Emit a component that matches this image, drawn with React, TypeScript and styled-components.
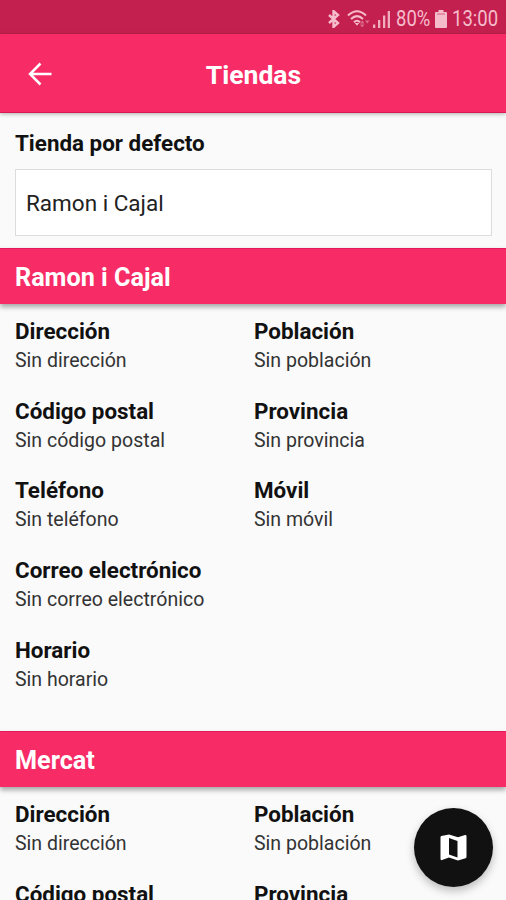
import React from 'react';
import styled, { createGlobalStyle } from 'styled-components';

const GlobalStyle = createGlobalStyle`
  * { box-sizing: border-box; }
  body {
    margin: 0;
    background: #fafafa;
    font-family: Roboto, sans-serif;
    overflow: hidden;
  }
`;

const Screen = styled.div`
  position: relative;
  display: flex;
  flex-direction: column;
  width: 506px;
  height: 900px;
  overflow: hidden;
  background: #fafafa;
  color: #111;
`;

const StatusBar = styled.div`
  display: flex;
  flex: none;
  align-items: center;
  justify-content: flex-end;
  height: 34px;
  padding: 3px 7px 0 0;
  background: #c4204f;
  color: #f5bccb;
`;

const StatusText = styled.span<{ $width: number }>`
  width: ${(p) => p.$width}px;
  font-size: 22px;
  line-height: 24px;
  white-space: nowrap;
  transform: scaleX(0.84);
  transform-origin: left center;
`;

const StatusIcon = styled.svg<{ $gap: number }>`
  display: block;
  flex: none;
  margin-right: ${(p) => p.$gap}px;
`;

const AppBar = styled.header`
  display: grid;
  flex: none;
  grid-template-columns: 80px 1fr 79px;
  align-items: center;
  height: 79px;
  padding: 2px 0 0 0;
  background: #f72c66;
  border-bottom: 1px solid #d81b55;
  box-shadow: 0 1px 4px rgba(0, 0, 0, 0.3);
  color: #fff;
  z-index: 1;
`;

const BackButton = styled.button`
  display: flex;
  align-items: center;
  justify-content: center;
  height: 60px;
  padding: 0;
  border: 0;
  background: none;
  color: inherit;
`;

const Title = styled.h1`
  margin: 0;
  padding-top: 2px;
  font-size: 26.5px;
  font-weight: 700;
  line-height: 30px;
  text-align: center;
`;

const DefaultStore = styled.section`
  display: flex;
  flex: none;
  flex-direction: column;
  height: 135px;
  padding: 17px 14px 0 15px;
`;

const Label = styled.div`
  font-size: 22.4px;
  font-weight: 700;
  line-height: 26px;
  white-space: nowrap;
`;

const Select = styled.div`
  display: flex;
  align-items: center;
  height: 67px;
  margin-top: 13px;
  padding-left: 10px;
  background: #fff;
  border: 1px solid #dcdcdc;
  font-size: 22.5px;
  color: #222;
`;

const StoreHeader = styled.h2`
  flex: none;
  height: 56px;
  margin: 0;
  padding: 2px 0 0 15px;
  background: #f72c66;
  border-top: 1px solid #e01a5b;
  box-shadow: 0 3px 5px rgba(0, 0, 0, 0.34);
  color: #fff;
  font-size: 25.2px;
  font-weight: 700;
  line-height: 54px;
`;

const Fields = styled.dl`
  display: grid;
  flex: none;
  grid-template-columns: 239px 1fr;
  grid-auto-rows: 79.7px;
  height: 427px;
  margin: 0;
  padding: 14px 0 0 15px;
`;

const Field = styled.div<{ $wide?: boolean }>`
  grid-column: ${(p) => (p.$wide ? '1 / -1' : 'auto')};
`;

const Name = styled(Label).attrs({ as: 'dt' })``;

const Value = styled.dd`
  margin: 4px 0 0;
  font-size: 19.55px;
  line-height: 26px;
  color: #333;
`;

const MapButton = styled.button`
  position: absolute;
  right: 13px;
  bottom: 13px;
  display: flex;
  align-items: center;
  justify-content: center;
  width: 79px;
  height: 79px;
  padding: 0;
  border: 0;
  border-radius: 50%;
  background: #111;
  color: #fff;
  box-shadow: 0 4px 9px rgba(0, 0, 0, 0.25);
  z-index: 2;
`;

const fields = [
  { name: 'Dirección', value: 'Sin dirección' },
  { name: 'Población', value: 'Sin población' },
  { name: 'Código postal', value: 'Sin código postal' },
  { name: 'Provincia', value: 'Sin provincia' },
  { name: 'Teléfono', value: 'Sin teléfono' },
  { name: 'Móvil', value: 'Sin móvil' },
  { name: 'Correo electrónico', value: 'Sin correo electrónico', wide: true },
  { name: 'Horario', value: 'Sin horario', wide: true },
];

const Store = ({ name }: { name: string }) => (
  <>
    <StoreHeader>{name}</StoreHeader>
    <Fields>
      {fields.map((f) => (
        <Field key={f.name} $wide={f.wide}>
          <Name>{f.name}</Name>
          <Value>{f.value}</Value>
        </Field>
      ))}
    </Fields>
  </>
);

const BluetoothIcon = () => (
  <StatusIcon $gap={7} width="12" height="18" viewBox="0 0 12 18" fill="none" stroke="currentColor" strokeWidth="2.4">
    <path d="M1 5l9 8-4.500 4V1L10 5 1 13" />
  </StatusIcon>
);

const WifiIcon = () => (
  <StatusIcon $gap={3} width="23" height="18" viewBox="0 0 23 18" fill="none" stroke="currentColor" strokeWidth="2">
    <path d="M1 5.500Q10 -3 19 5.500M4 9Q10 3.200 16 9M7 12.300Q10 9.300 13 12.300" />
    <path d="M7.800 13h4.400L10 15.800z" fill="currentColor" stroke="none" />
    <path d="M13 13.500l2.200-3 2.200 3zM13 14.500h4.400l-2.200 3zM18 10.500h4.500l-2.200 3z" fill="currentColor" stroke="none" opacity=".5" />
  </StatusIcon>
);

const SignalIcon = () => (
  <StatusIcon $gap={6} width="17" height="18" viewBox="0 0 17 18" fill="currentColor">
    <path d="M0 14.500h2.300V18H0zM5 10h2.300v8H5zM10 5.500h2.300V18H10zM14.700 1H17v17h-2.300z" opacity=".9" />
  </StatusIcon>
);

const BatteryIcon = () => (
  <StatusIcon $gap={5} width="12" height="18" viewBox="0 0 12 18" fill="currentColor">
    <path d="M3.500 0h5v2H11q1 0 1 1v14q0 1-1 1H1q-1 0-1-1V3q0-1 1-1h2.500z" />
    <path d="M2 4h8" stroke="#c4204f" strokeWidth="1" opacity=".6" />
  </StatusIcon>
);

export default function App() {
  return (
    <>
      <GlobalStyle />
      <Screen>
        <StatusBar>
          <BluetoothIcon />
          <WifiIcon />
          <SignalIcon />
          <StatusText $width={39}>80%</StatusText>
          <BatteryIcon />
          <StatusText $width={47}>13:00</StatusText>
        </StatusBar>
        <AppBar>
          <BackButton aria-label="Atrás">
            <svg width="24" height="24" viewBox="0 0 24 24" fill="none" stroke="currentColor" strokeWidth="2.500">
              <path d="M23.500 12H2M12.500 1.500L2 12l10.500 10.500" />
            </svg>
          </BackButton>
          <Title>Tiendas</Title>
        </AppBar>
        <DefaultStore>
          <Label>Tienda por defecto</Label>
          <Select>Ramon i Cajal</Select>
        </DefaultStore>
        <Store name="Ramon i Cajal" />
        <Store name="Mercat" />
        <MapButton aria-label="Mapa">
          <svg width="27" height="27" viewBox="0 0 27 27" fill="currentColor">
            <path fillRule="evenodd" d="M.5 3q0-.8.8-1.100L9 .500l9 2.800L25 1q1.500-.3 1.500 1v21q0 1-1 1.200L18 26.500 9 23.500 2 26Q.5 26.500.5 25zM9 4v16.500l8.500 3V7z" />
          </svg>
        </MapButton>
      </Screen>
    </>
  );
}
